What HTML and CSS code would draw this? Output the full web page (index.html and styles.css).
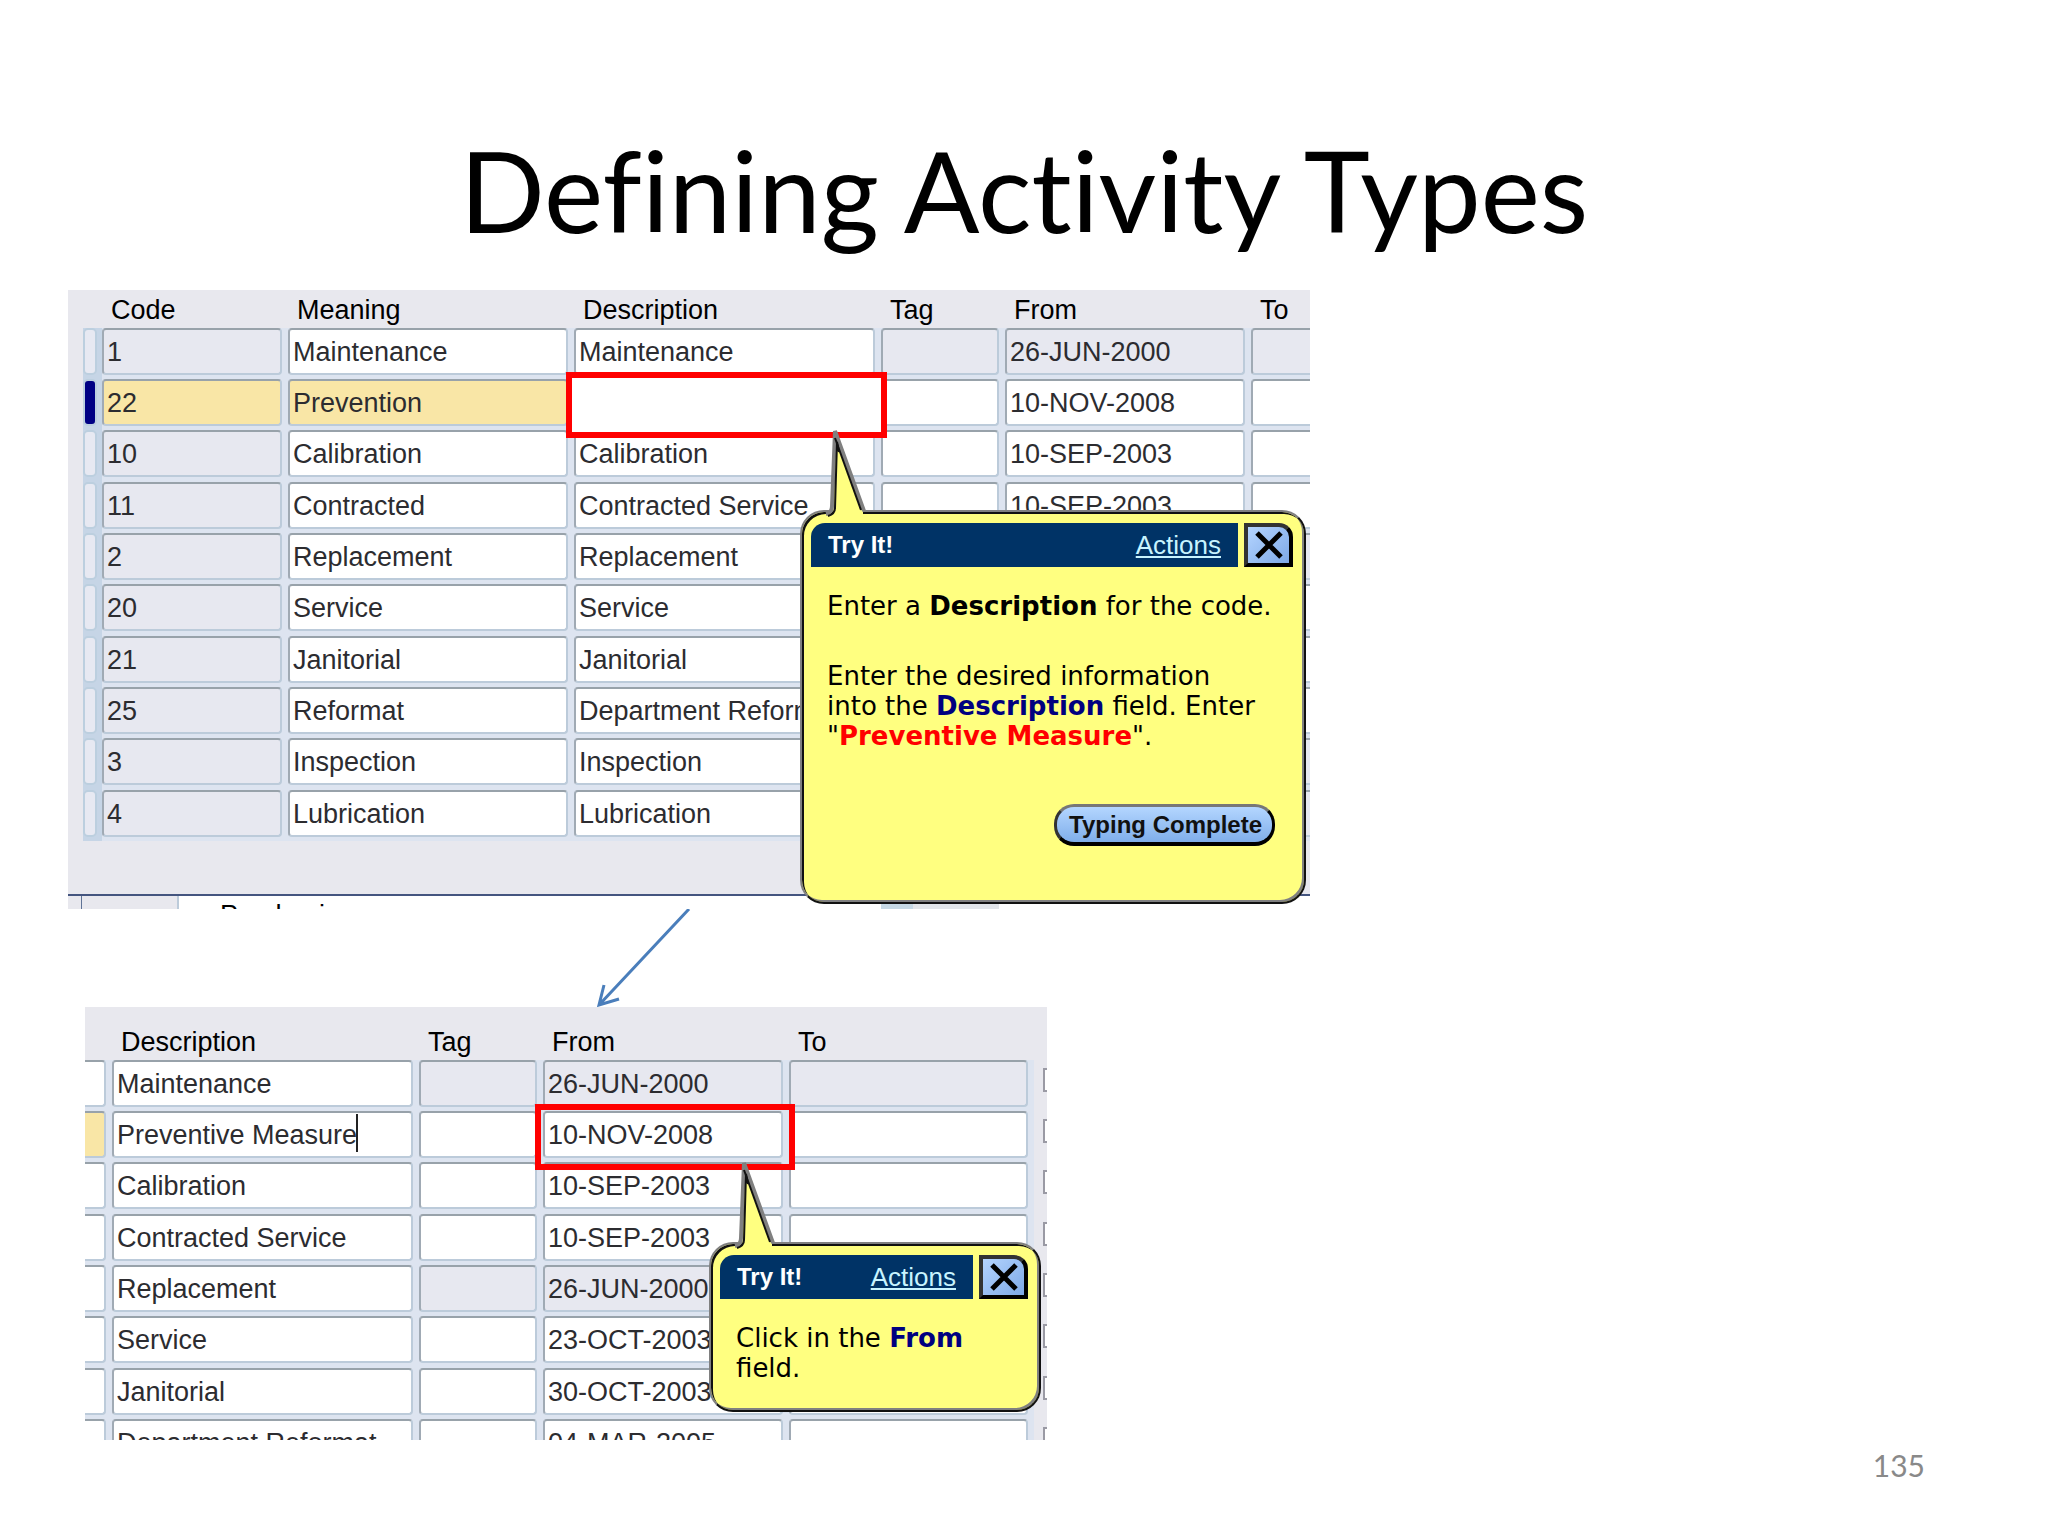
FILE: index.html
```
<!DOCTYPE html>
<html lang="en">
<head>
    <meta charset="UTF-8">
    <meta name="viewport" content="width=device-width, initial-scale=1.0">
    <title>Defining Activity Types</title>
    <link rel="stylesheet" href="styles.css">
</head>
<body>
    <main class="slide">
        <h1 class="slide-title">Defining Activity Types</h1>

        <section class="panel panel-codes">
            <table class="grid">
                <colgroup>
                    <col class="col-handle"><col class="col-code"><col class="col-meaning"><col class="col-desc"><col class="col-tag"><col class="col-from"><col>
                </colgroup>
                <thead>
                    <tr><th></th><th>Code</th><th>Meaning</th><th>Description</th><th>Tag</th><th>From</th><th>To</th></tr>
                </thead>
                <tbody>
                    <tr>
                        <td class="handle"><button aria-label="Select row 1"></button></td>
                        <td><input class="locked" aria-label="Code" value="1"></td>
                        <td><input aria-label="Meaning" value="Maintenance"></td>
                        <td><input aria-label="Description" value="Maintenance"></td>
                        <td><input class="locked" aria-label="Tag"></td>
                        <td><input class="locked" aria-label="From" value="26-JUN-2000"></td>
                        <td class="cut"><input class="locked" aria-label="To"></td>
                    </tr>
                    <tr>
                        <td class="handle"><button class="current" aria-label="Select row 2"></button></td>
                        <td><input class="active" aria-label="Code" value="22"></td>
                        <td><input class="active" aria-label="Meaning" value="Prevention"></td>
                        <td><input aria-label="Description"><div class="marker marker-filled"></div></td>
                        <td><input aria-label="Tag"></td>
                        <td><input aria-label="From" value="10-NOV-2008"></td>
                        <td class="cut"><input aria-label="To"></td>
                    </tr>
                    <tr>
                        <td class="handle"><button aria-label="Select row 3"></button></td>
                        <td><input class="locked" aria-label="Code" value="10"></td>
                        <td><input aria-label="Meaning" value="Calibration"></td>
                        <td><input aria-label="Description" value="Calibration"></td>
                        <td><input aria-label="Tag"></td>
                        <td><input aria-label="From" value="10-SEP-2003"></td>
                        <td class="cut"><input aria-label="To"></td>
                    </tr>
                    <tr>
                        <td class="handle"><button aria-label="Select row 4"></button></td>
                        <td><input class="locked" aria-label="Code" value="11"></td>
                        <td><input aria-label="Meaning" value="Contracted"></td>
                        <td><input aria-label="Description" value="Contracted Service"></td>
                        <td><input aria-label="Tag"></td>
                        <td><input aria-label="From" value="10-SEP-2003"></td>
                        <td class="cut"><input aria-label="To"></td>
                    </tr>
                    <tr>
                        <td class="handle"><button aria-label="Select row 5"></button></td>
                        <td><input class="locked" aria-label="Code" value="2"></td>
                        <td><input aria-label="Meaning" value="Replacement"></td>
                        <td><input aria-label="Description" value="Replacement"></td>
                        <td><input class="locked" aria-label="Tag"></td>
                        <td><input class="locked" aria-label="From"></td>
                        <td class="cut"><input class="locked" aria-label="To"></td>
                    </tr>
                    <tr>
                        <td class="handle"><button aria-label="Select row 6"></button></td>
                        <td><input class="locked" aria-label="Code" value="20"></td>
                        <td><input aria-label="Meaning" value="Service"></td>
                        <td><input aria-label="Description" value="Service"></td>
                        <td><input aria-label="Tag"></td>
                        <td><input aria-label="From"></td>
                        <td class="cut"><input aria-label="To"></td>
                    </tr>
                    <tr>
                        <td class="handle"><button aria-label="Select row 7"></button></td>
                        <td><input class="locked" aria-label="Code" value="21"></td>
                        <td><input aria-label="Meaning" value="Janitorial"></td>
                        <td><input aria-label="Description" value="Janitorial"></td>
                        <td><input aria-label="Tag"></td>
                        <td><input aria-label="From"></td>
                        <td class="cut"><input aria-label="To"></td>
                    </tr>
                    <tr>
                        <td class="handle"><button aria-label="Select row 8"></button></td>
                        <td><input class="locked" aria-label="Code" value="25"></td>
                        <td><input aria-label="Meaning" value="Reformat"></td>
                        <td><input aria-label="Description" value="Department Reformat"></td>
                        <td><input aria-label="Tag"></td>
                        <td><input aria-label="From"></td>
                        <td class="cut"><input aria-label="To"></td>
                    </tr>
                    <tr>
                        <td class="handle"><button aria-label="Select row 9"></button></td>
                        <td><input class="locked" aria-label="Code" value="3"></td>
                        <td><input aria-label="Meaning" value="Inspection"></td>
                        <td><input aria-label="Description" value="Inspection"></td>
                        <td><input class="locked" aria-label="Tag"></td>
                        <td><input class="locked" aria-label="From"></td>
                        <td class="cut"><input class="locked" aria-label="To"></td>
                    </tr>
                    <tr>
                        <td class="handle"><button aria-label="Select row 10"></button></td>
                        <td><input class="locked" aria-label="Code" value="4"></td>
                        <td><input aria-label="Meaning" value="Lubrication"></td>
                        <td><input aria-label="Description" value="Lubrication"></td>
                        <td><input class="locked" aria-label="Tag"></td>
                        <td><input class="locked" aria-label="From"></td>
                        <td class="cut"><input class="locked" aria-label="To"></td>
                    </tr>
                </tbody>
            </table>

            <!-- top edge of the window behind the form -->
            <div class="behind">
                <div class="behind-edge"></div>
                <div class="behind-tab"></div>
                <div class="behind-text">Purchasing</div>
                <div class="behind-chip"></div>
            </div>

            <div class="callout callout-description">
                <svg class="pointer" width="44" height="90" viewBox="0 0 44 90">
                    <path class="pointer-fill" d="M10 88 L13 14 L40 82 L40 90 L10 90 Z"/>
                    <path class="pointer-edge" d="M3 86 Q9 85 9 78 L12 3 L41 83"/>
                    <path class="pointer-line" d="M5 88 Q12 86 12 80 L14 14 L16 24"/>
                    <path class="pointer-line" d="M12 10 L38 82"/>
                </svg>
                <div class="callout-head">
                    <div class="callout-bar"><strong>Try It!</strong><a href="#">Actions</a></div>
                    <button class="close" aria-label="Close">
                        <svg width="30" height="30" viewBox="0 0 30 30"><path d="M3 3 L27 27 M27 3 L3 27"/></svg>
                    </button>
                </div>
                <div class="callout-text">
                    <p>Enter a <b>Description</b> for the code.</p>
                    <p>Enter the desired information<br>into the <b class="navy">Description</b> field. Enter<br>"<b class="red">Preventive Measure</b>".</p>
                </div>
                <button class="typing">Typing Complete</button>
            </div>
        </section>

        <svg class="arrow" width="100" height="98" viewBox="0 0 100 98">
            <path d="M94 0 L4 96 M9 76 L4 96 L24 90"/>
        </svg>

        <section class="panel panel-from">
            <table class="grid">
                <colgroup>
                    <col class="col-rest"><col class="col-desc"><col class="col-tag"><col class="col-from"><col class="col-to"><col>
                </colgroup>
                <thead>
                    <tr><th></th><th>Description</th><th>Tag</th><th>From</th><th>To</th><th></th></tr>
                </thead>
                <tbody>
                    <tr>
                        <td class="cut-left"><input aria-label="Meaning"></td>
                        <td><input aria-label="Description" value="Maintenance"></td>
                        <td><input class="locked" aria-label="Tag"></td>
                        <td><input class="locked" aria-label="From" value="26-JUN-2000"></td>
                        <td><input class="locked" aria-label="To"></td>
                        <td class="flag"><span></span></td>
                    </tr>
                    <tr>
                        <td class="cut-left"><input class="active" aria-label="Meaning"></td>
                        <td><input aria-label="Description" value="Preventive Measure"><span class="caret"></span></td>
                        <td><input aria-label="Tag"></td>
                        <td><input aria-label="From" value="10-NOV-2008"><div class="marker"></div></td>
                        <td><input aria-label="To"></td>
                        <td class="flag"><span></span></td>
                    </tr>
                    <tr>
                        <td class="cut-left"><input aria-label="Meaning"></td>
                        <td><input aria-label="Description" value="Calibration"></td>
                        <td><input aria-label="Tag"></td>
                        <td><input aria-label="From" value="10-SEP-2003"></td>
                        <td><input aria-label="To"></td>
                        <td class="flag"><span></span></td>
                    </tr>
                    <tr>
                        <td class="cut-left"><input aria-label="Meaning"></td>
                        <td><input aria-label="Description" value="Contracted Service"></td>
                        <td><input aria-label="Tag"></td>
                        <td><input aria-label="From" value="10-SEP-2003"></td>
                        <td><input aria-label="To"></td>
                        <td class="flag"><span></span></td>
                    </tr>
                    <tr>
                        <td class="cut-left"><input aria-label="Meaning"></td>
                        <td><input aria-label="Description" value="Replacement"></td>
                        <td><input class="locked" aria-label="Tag"></td>
                        <td><input class="locked" aria-label="From" value="26-JUN-2000"></td>
                        <td><input class="locked" aria-label="To"></td>
                        <td class="flag"><span></span></td>
                    </tr>
                    <tr>
                        <td class="cut-left"><input aria-label="Meaning"></td>
                        <td><input aria-label="Description" value="Service"></td>
                        <td><input aria-label="Tag"></td>
                        <td><input aria-label="From" value="23-OCT-2003"></td>
                        <td><input aria-label="To"></td>
                        <td class="flag"><span></span></td>
                    </tr>
                    <tr>
                        <td class="cut-left"><input aria-label="Meaning"></td>
                        <td><input aria-label="Description" value="Janitorial"></td>
                        <td><input aria-label="Tag"></td>
                        <td><input aria-label="From" value="30-OCT-2003"></td>
                        <td><input aria-label="To"></td>
                        <td class="flag"><span></span></td>
                    </tr>
                    <tr>
                        <td class="cut-left"><input aria-label="Meaning"></td>
                        <td><input aria-label="Description" value="Department Reformat"></td>
                        <td><input aria-label="Tag"></td>
                        <td><input aria-label="From" value="04-MAR-2005"></td>
                        <td><input aria-label="To"></td>
                        <td class="flag"><span></span></td>
                    </tr>
                </tbody>
            </table>
        </section>

        <div class="callout callout-from">
            <svg class="pointer" width="44" height="90" viewBox="0 0 44 90">
                <path class="pointer-fill" d="M10 88 L13 14 L40 82 L40 90 L10 90 Z"/>
                <path class="pointer-edge" d="M3 86 Q9 85 9 78 L12 3 L41 83"/>
                <path class="pointer-line" d="M5 88 Q12 86 12 80 L14 14 L16 24"/>
                <path class="pointer-line" d="M12 10 L38 82"/>
            </svg>
            <div class="callout-head">
                <div class="callout-bar"><strong>Try It!</strong><a href="#">Actions</a></div>
                <button class="close" aria-label="Close">
                    <svg width="30" height="30" viewBox="0 0 30 30"><path d="M3 3 L27 27 M27 3 L3 27"/></svg>
                </button>
            </div>
            <div class="callout-text">
                <p>Click in the <b class="navy">From</b><br>field.</p>
            </div>
        </div>

        <footer class="page-number">135</footer>
    </main>
</body>
</html>
```
FILE: styles.css
```
* {
    box-sizing: border-box;
}

body {
    margin: 0;
    background: #fff;
    color: #000;
    font-family: "Liberation Sans", Arial, sans-serif;
}

.slide {
    position: relative;
    min-height: 100vh;
    padding: 0 68px;
}

.slide-title {
    margin: 0;
    padding-top: 122px;
    height: 290px;
    font-family: Lato, sans-serif;
    font-size: 112px;
    font-variant-ligatures: none;
    font-weight: 400;
    line-height: 136px;
    text-align: center;
}

/* form panels */
.panel {
    position: relative;
    background: #e8e8ee;
}

.panel-codes {
    max-width: 1242px;
}

.panel-from {
    max-width: 962px;
    height: 433px;
    margin-left: 17px;
    overflow: hidden;
}

.grid {
    width: 100%;
    table-layout: fixed;
    border-spacing: 0;
}

.panel-codes .grid {
    border-left: 15px solid #e8e8ee;
}

.col-handle { width: 19px; }
.col-code { width: 186px; }
.col-meaning { width: 286px; }
.col-desc { width: 307px; }
.col-tag { width: 124px; }
.col-from { width: 246px; }
.col-to { width: 245px; }
.col-rest { width: 27px; }

.grid th {
    height: 38px;
    padding: 2px 0 0 9px;
    font-size: 27px;
    font-weight: 400;
    line-height: 36px;
    text-align: left;
}

.panel-from .grid th {
    height: 53px;
    padding-top: 17px;
}

.grid td {
    position: relative;
    height: 51px;
    padding: 0 6px 4px 0;
    background: #dde4f0;
    vertical-align: top;
}

.grid tr:nth-child(3n) td {
    height: 52px;
}

.grid input {
    display: block;
    width: 100%;
    height: 47px;
    margin: 0;
    padding: 2px 0 0 3px;
    border: 2px solid;
    border-color: #98a2aa #bccbda #bccbda #a0aab4;
    border-radius: 4px;
    outline: none;
    background: #fff;
    color: #2c2c30;
    font-family: inherit;
    font-size: 27px;
}

.grid input.locked {
    background: #e7e8f0;
}

.grid input.active {
    background: #f9e6a6;
}

.grid .cut {
    padding-right: 0;
}

.grid .cut input {
    border-right: 0;
    border-radius: 4px 0 0 4px;
}

.grid .cut-left input {
    border-left: 0;
    border-radius: 0 4px 4px 0;
}

.grid .handle {
    padding: 0 5px 4px 0;
    background: #c6d5e6;
}

.handle button {
    display: block;
    width: 14px;
    height: 47px;
    padding: 0;
    border: 2px solid #bccfdf;
    border-radius: 5px;
    background: #e7e9f2;
}

.handle button.current {
    background: #000084;
}

.grid .flag {
    padding: 8px 0 0 9px;
    background: #e8e8ee;
}

.flag span {
    display: block;
    height: 24px;
    border: 2px solid #9a9aa4;
    border-right: 0;
    background: #fff;
}

.caret {
    position: absolute;
    top: 3px;
    left: 244px;
    width: 2px;
    height: 38px;
    background: #222;
}

.marker {
    position: absolute;
    top: -7px;
    right: -6px;
    bottom: -8px;
    left: -8px;
    z-index: 1;
    border: 6px solid #f00;
}

.marker-filled {
    background: #fff;
}

.behind {
    display: flex;
    height: 68px;
    padding-top: 53px;
    overflow: hidden;
    background: linear-gradient(#e8e8ee 53px, #fff 53px);
    position: relative;
}

.behind::before {
    content: "";
    position: absolute;
    top: 53px;
    left: 0;
    right: 0;
    height: 2px;
    background: #44557f;
}

.behind-edge {
    width: 14px;
    border-right: 1px solid #5f7396;
    background: #e8e8ee;
}

.behind-tab {
    width: 97px;
    border-right: 2px solid #bccbda;
    background: #e8e8ee;
}

.behind-text {
    width: 702px;
    padding: 6px 0 0 41px;
    font-size: 27px;
    line-height: 31px;
}

.behind-chip {
    width: 118px;
    background: linear-gradient(90deg, #c6d8e4 32px, #e2e5e9 32px);
}

/* yellow help bubbles */
.callout {
    position: absolute;
    z-index: 2;
    padding: 11px 11px 12px 9px;
    border: 2px solid;
    border-color: #808080 #111 #111 #808080;
    border-radius: 24px;
    background: #ffff80;
    box-shadow: inset 2px 2px 0 #111, inset -2px -2px 0 #808080;
}

.callout-description {
    top: 220px;
    left: 732px;
    width: 506px;
    height: 394px;
}

.callout-from {
    top: 1242px;
    left: 709px;
    width: 332px;
    height: 170px;
}

.pointer {
    position: absolute;
    top: -84px;
    left: 21px;
}

.pointer-fill {
    fill: #ffff80;
}

.pointer-edge {
    fill: none;
    stroke: #808080;
    stroke-width: 4;
}

.pointer-line {
    fill: none;
    stroke: #111;
    stroke-width: 2;
}

.callout-head {
    display: flex;
    gap: 6px;
    height: 44px;
}

.callout-bar {
    flex: 1;
    display: flex;
    align-items: center;
    justify-content: space-between;
    padding: 0 17px;
    border-top-left-radius: 14px;
    background: #003366;
    color: #fff;
    font-size: 24px;
}

.callout-bar a {
    color: #c8f4ff;
    font-size: 26px;
}

.close {
    display: flex;
    align-items: center;
    justify-content: center;
    width: 49px;
    padding: 0;
    border: 4px solid;
    border-color: #333 #000 #000 #333;
    border-top-right-radius: 14px;
    background: linear-gradient(135deg, #b4d4ff, #7ea9e6);
}

.close svg {
    fill: none;
    stroke: #000;
    stroke-width: 5;
}

.callout-text {
    padding: 24px 0 0 16px;
    font-family: "DejaVu Sans", Verdana, sans-serif;
    font-size: 26px;
    line-height: 30px;
    white-space: nowrap;
}

.callout-text p {
    margin: 0 0 40px;
}

.navy {
    color: #000080;
}

.red {
    color: #f00;
}

.typing {
    position: absolute;
    right: 29px;
    bottom: 56px;
    height: 42px;
    padding: 0 10px 0 12px;
    border: 3px solid;
    border-color: #777 #000 #000 #333;
    border-bottom-width: 4px;
    border-radius: 20px;
    background: linear-gradient(#b4d6ff, #7faeea);
    color: #111;
    font-family: inherit;
    font-size: 24px;
    font-weight: 700;
}

.arrow {
    display: block;
    margin-left: 527px;
    fill: none;
    stroke: #4a7ebb;
    stroke-width: 3;
}

.page-number {
    position: absolute;
    right: 123px;
    bottom: 53px;
    color: #898989;
    font-family: Lato, sans-serif;
    font-size: 30px;
    line-height: 36px;
}
```
